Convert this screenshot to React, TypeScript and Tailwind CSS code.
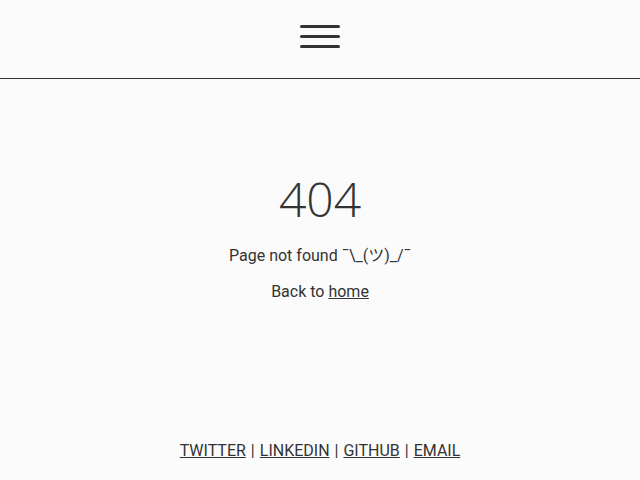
export default function App() {
  return (
    <div className="flex min-h-screen flex-col bg-[#fbfbfb] font-[Roboto,'Noto_Sans_CJK_JP',sans-serif] text-base leading-5 text-[#333]">
      <header className="flex justify-center border-b border-[#333] pt-[25px] pb-[30px]">
        <button type="button" aria-label="Menu" className="flex w-10 flex-col gap-[7px]">
          <span className="h-[3px] w-full rounded-full bg-[#333]" />
          <span className="h-[3px] w-full rounded-full bg-[#333]" />
          <span className="h-[3px] w-full rounded-full bg-[#333]" />
        </button>
      </header>
      <main className="flex grow flex-col items-center gap-4 pt-24 text-center">
        <h1 className="mb-[7px] font-['Open_Sans',sans-serif] text-5xl font-light">404</h1>
        <p>Page not found ¯\_(ツ)_/¯</p>
        <p>
          Back to <a href="#home" className="underline">home</a>
        </p>
      </main>
      <footer className="flex flex-wrap justify-center gap-x-[5px] pb-[19px]">
        <a href="#twitter" className="underline">TWITTER</a>
        <span>|</span>
        <a href="#linkedin" className="underline">LINKEDIN</a>
        <span>|</span>
        <a href="#github" className="underline">GITHUB</a>
        <span>|</span>
        <a href="#email" className="underline">EMAIL</a>
      </footer>
    </div>
  );
}
